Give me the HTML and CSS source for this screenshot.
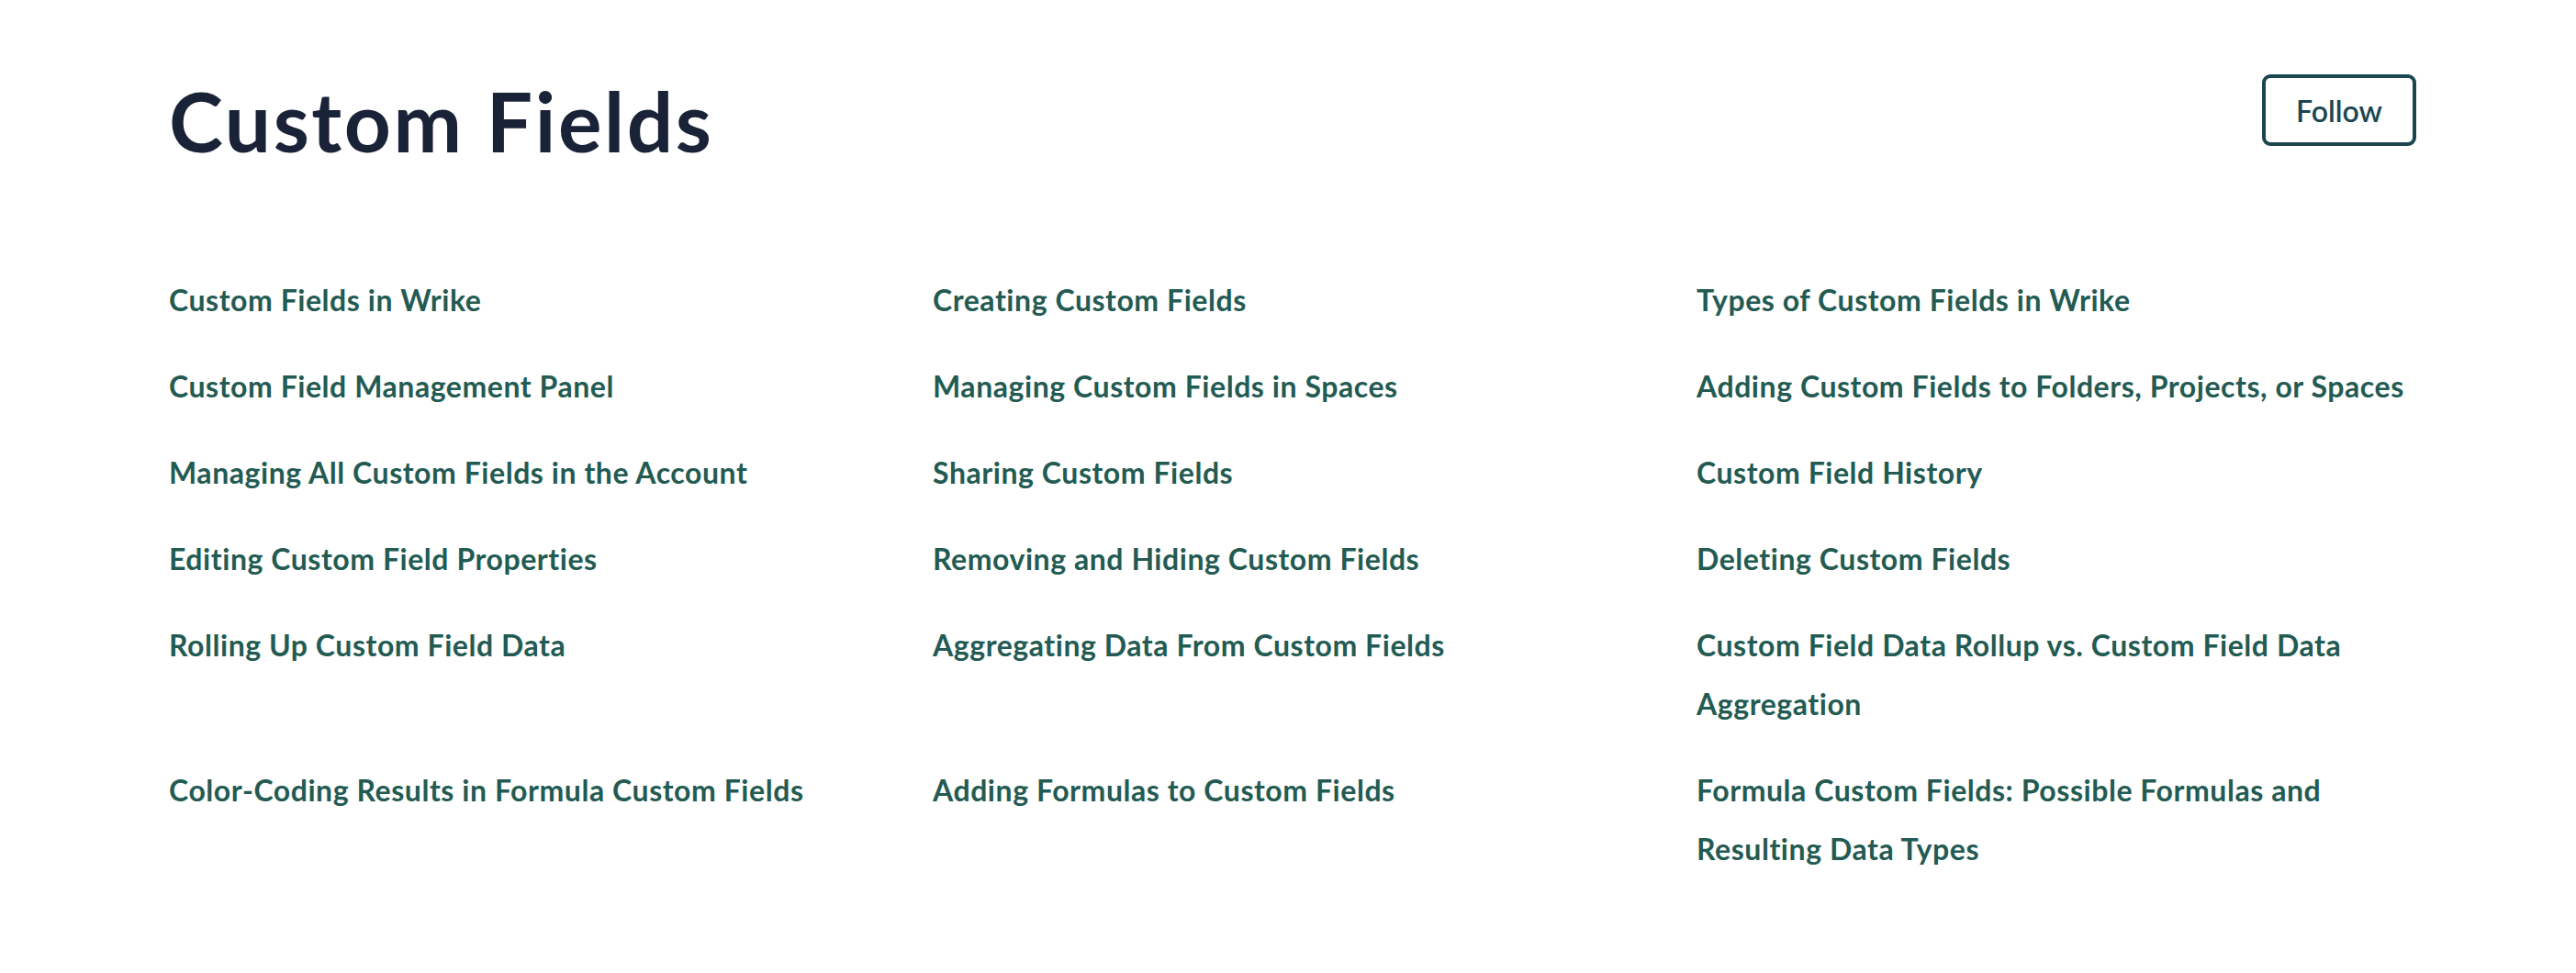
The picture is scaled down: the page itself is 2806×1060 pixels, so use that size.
FILE: index.html
```html
<!DOCTYPE html>
<html lang="en">
<head>
<meta charset="utf-8">
<title>Custom Fields</title>
<link rel="stylesheet" href="styles.css">
</head>
<body>
<main class="page">
  <header class="header">
    <h1 class="title">Custom Fields</h1>
    <button class="follow" type="button">Follow</button>
  </header>
  <ul class="articles">
    <li><a href="#">Custom Fields in Wrike</a></li>
    <li><a href="#">Creating Custom Fields</a></li>
    <li><a href="#">Types of Custom Fields in Wrike</a></li>
    <li><a href="#">Custom Field Management Panel</a></li>
    <li><a href="#">Managing Custom Fields in Spaces</a></li>
    <li><a href="#">Adding Custom Fields to Folders, Projects, or Spaces</a></li>
    <li><a href="#">Managing All Custom Fields in the Account</a></li>
    <li><a href="#">Sharing Custom Fields</a></li>
    <li><a href="#">Custom Field History</a></li>
    <li><a href="#">Editing Custom Field Properties</a></li>
    <li><a href="#">Removing and Hiding Custom Fields</a></li>
    <li><a href="#">Deleting Custom Fields</a></li>
    <li><a href="#">Rolling Up Custom Field Data</a></li>
    <li><a href="#">Aggregating Data From Custom Fields</a></li>
    <li><a href="#">Custom Field Data Rollup vs. Custom Field Data Aggregation</a></li>
    <li><a href="#">Color-Coding Results in Formula Custom Fields</a></li>
    <li><a href="#">Adding Formulas to Custom Fields</a></li>
    <li><a href="#">Formula Custom Fields: Possible Formulas and Resulting Data Types</a></li>
  </ul>
</main>
</body>
</html>
```
FILE: styles.css
```css
html, body {
  margin: 0;
  padding: 0;
  background: #ffffff;
}

body {
  font-family: Lato, "Noto Sans", sans-serif;
}

.page {
  width: 2448px;
  padding: 79px 0 0 184px;
}

.header {
  display: flex;
  justify-content: space-between;
  align-items: flex-start;
}

.title {
  margin: 0;
  font-size: 89px;
  line-height: 106px;
  font-weight: 700;
  letter-spacing: 2.6px;
  color: #1a2238;
}

.follow {
  margin-top: 2px;
  width: 168px;
  height: 78px;
  border: 4px solid #1b4650;
  border-radius: 9px;
  background: #ffffff;
  color: #1b4650;
  font-family: Lato, "Noto Sans", sans-serif;
  font-size: 32px;
  font-weight: 600;
  padding: 0;
}

.articles {
  list-style: none;
  margin: 110px 0 0 0;
  padding: 0;
  display: grid;
  grid-template-columns: repeat(3, 784px);
  column-gap: 48px;
  row-gap: 30px;
}

.articles a {
  color: #235b53;
  text-decoration: none;
  font-size: 32px;
  line-height: 64px;
  font-weight: 700;
  letter-spacing: 0.55px;
}
```
